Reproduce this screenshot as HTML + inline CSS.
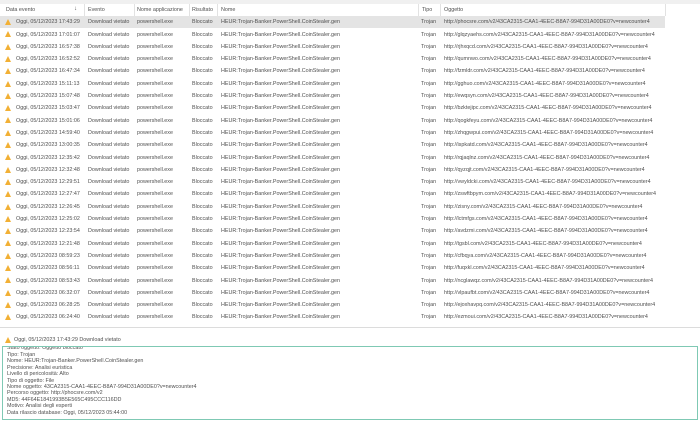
<!DOCTYPE html>
<html><head><meta charset="utf-8"><style>
html,body{margin:0;padding:0;width:700px;height:421px;overflow:hidden;background:#fff;font-family:"Liberation Sans",sans-serif;color:#505050;font-size:5.4px}
.top{position:absolute;left:0;top:0;width:700px;height:4px;background:#f0f0f0}
.wrap{position:absolute;left:0;top:4px;width:700px;height:323px;border-bottom:1px solid #dcdcdc}
.hdr{position:absolute;top:0;left:0;width:700px;height:12px;background:#fff}
.hdr span{position:absolute;top:3px;white-space:nowrap}
.sep{position:absolute;top:0;width:1px;height:12px;background:#e2e2e2}
.row{position:absolute;left:0;width:700px;height:12.3px}
.row span{position:absolute;top:3.3px;white-space:nowrap}
.sel{background:#e4e4e4;width:665px}
.ic{position:absolute;left:5px;top:3px;width:0;height:0;border-left:3.5px solid transparent;border-right:3.5px solid transparent;border-bottom:6px solid #f2b035}
.c1{left:16px}.c2{left:88px}.c3{left:137px}.c4{left:192px}.c5{left:221px}.c6{left:421px}.c7{left:444px}
.lab{position:absolute;left:5px;top:337px;white-space:nowrap}
.lab .ic{top:-0.5px;left:0}
.box{position:absolute;left:2px;top:346px;width:694px;height:72px;border:1px solid #7fc9b4;overflow:hidden}
.box div{position:absolute;left:4px;white-space:nowrap}
</style></head><body>
<div class="top"></div>
<div class="wrap">
<div class="hdr">
<span style="left:6px">Data evento</span><span style="left:74px;font-size:6px;top:2px">&#8595;</span>
<div class="sep" style="left:84px"></div><span style="left:88px">Evento</span>
<div class="sep" style="left:134px"></div><span style="left:137px">Nome applicazione</span>
<div class="sep" style="left:189px"></div><span style="left:192px">Risultato</span>
<div class="sep" style="left:217px"></div><span style="left:221px">Nome</span>
<div class="sep" style="left:418px"></div><span style="left:422px">Tipo</span>
<div class="sep" style="left:440px"></div><span style="left:444px">Oggetto</span>
<div class="sep" style="left:665px"></div>
</div>
<div class="row sel" style="top:12px"><i class="ic"></i><span class="c1">Oggi, 05/12/2023 17:43:29</span><span class="c2">Download vietato</span><span class="c3">powershell.exe</span><span class="c4">Bloccato</span><span class="c5">HEUR:Trojan-Banker.PowerShell.CoinStealer.gen</span><span class="c6">Trojan</span><span class="c7">http://phocsre.com/v2/43CA2315-CAA1-4EEC-B8A7-994D31A00DE0?v=newcounter4</span></div>
<div class="row" style="top:24.3px"><i class="ic"></i><span class="c1">Oggi, 05/12/2023 17:01:07</span><span class="c2">Download vietato</span><span class="c3">powershell.exe</span><span class="c4">Bloccato</span><span class="c5">HEUR:Trojan-Banker.PowerShell.CoinStealer.gen</span><span class="c6">Trojan</span><span class="c7">http://glqzyaehs.com/v2/43CA2315-CAA1-4EEC-B8A7-994D31A00DE0?v=newcounter4</span></div>
<div class="row" style="top:36.6px"><i class="ic"></i><span class="c1">Oggi, 05/12/2023 16:57:38</span><span class="c2">Download vietato</span><span class="c3">powershell.exe</span><span class="c4">Bloccato</span><span class="c5">HEUR:Trojan-Banker.PowerShell.CoinStealer.gen</span><span class="c6">Trojan</span><span class="c7">http://rjhxqcd.com/v2/43CA2315-CAA1-4EEC-B8A7-994D31A00DE0?v=newcounter4</span></div>
<div class="row" style="top:48.9px"><i class="ic"></i><span class="c1">Oggi, 05/12/2023 16:52:52</span><span class="c2">Download vietato</span><span class="c3">powershell.exe</span><span class="c4">Bloccato</span><span class="c5">HEUR:Trojan-Banker.PowerShell.CoinStealer.gen</span><span class="c6">Trojan</span><span class="c7">http://qumnwo.com/v2/43CA2315-CAA1-4EEC-B8A7-994D31A00DE0?v=newcounter4</span></div>
<div class="row" style="top:61.2px"><i class="ic"></i><span class="c1">Oggi, 05/12/2023 16:47:34</span><span class="c2">Download vietato</span><span class="c3">powershell.exe</span><span class="c4">Bloccato</span><span class="c5">HEUR:Trojan-Banker.PowerShell.CoinStealer.gen</span><span class="c6">Trojan</span><span class="c7">http://fzmldr.com/v2/43CA2315-CAA1-4EEC-B8A7-994D31A00DE0?v=newcounter4</span></div>
<div class="row" style="top:73.5px"><i class="ic"></i><span class="c1">Oggi, 05/12/2023 15:11:13</span><span class="c2">Download vietato</span><span class="c3">powershell.exe</span><span class="c4">Bloccato</span><span class="c5">HEUR:Trojan-Banker.PowerShell.CoinStealer.gen</span><span class="c6">Trojan</span><span class="c7">http://gghuo.com/v2/43CA2315-CAA1-4EEC-B8A7-994D31A00DE0?v=newcounter4</span></div>
<div class="row" style="top:85.8px"><i class="ic"></i><span class="c1">Oggi, 05/12/2023 15:07:48</span><span class="c2">Download vietato</span><span class="c3">powershell.exe</span><span class="c4">Bloccato</span><span class="c5">HEUR:Trojan-Banker.PowerShell.CoinStealer.gen</span><span class="c6">Trojan</span><span class="c7">http://ewqsyn.com/v2/43CA2315-CAA1-4EEC-B8A7-994D31A00DE0?v=newcounter4</span></div>
<div class="row" style="top:98.1px"><i class="ic"></i><span class="c1">Oggi, 05/12/2023 15:03:47</span><span class="c2">Download vietato</span><span class="c3">powershell.exe</span><span class="c4">Bloccato</span><span class="c5">HEUR:Trojan-Banker.PowerShell.CoinStealer.gen</span><span class="c6">Trojan</span><span class="c7">http://bzktejipc.com/v2/43CA2315-CAA1-4EEC-B8A7-994D31A00DE0?v=newcounter4</span></div>
<div class="row" style="top:110.4px"><i class="ic"></i><span class="c1">Oggi, 05/12/2023 15:01:06</span><span class="c2">Download vietato</span><span class="c3">powershell.exe</span><span class="c4">Bloccato</span><span class="c5">HEUR:Trojan-Banker.PowerShell.CoinStealer.gen</span><span class="c6">Trojan</span><span class="c7">http://qogkfeyu.com/v2/43CA2315-CAA1-4EEC-B8A7-994D31A00DE0?v=newcounter4</span></div>
<div class="row" style="top:122.7px"><i class="ic"></i><span class="c1">Oggi, 05/12/2023 14:59:40</span><span class="c2">Download vietato</span><span class="c3">powershell.exe</span><span class="c4">Bloccato</span><span class="c5">HEUR:Trojan-Banker.PowerShell.CoinStealer.gen</span><span class="c6">Trojan</span><span class="c7">http://zhqgwpui.com/v2/43CA2315-CAA1-4EEC-B8A7-994D31A00DE0?v=newcounter4</span></div>
<div class="row" style="top:135px"><i class="ic"></i><span class="c1">Oggi, 05/12/2023 13:00:35</span><span class="c2">Download vietato</span><span class="c3">powershell.exe</span><span class="c4">Bloccato</span><span class="c5">HEUR:Trojan-Banker.PowerShell.CoinStealer.gen</span><span class="c6">Trojan</span><span class="c7">http://ispkatd.com/v2/43CA2315-CAA1-4EEC-B8A7-994D31A00DE0?v=newcounter4</span></div>
<div class="row" style="top:147.3px"><i class="ic"></i><span class="c1">Oggi, 05/12/2023 12:35:42</span><span class="c2">Download vietato</span><span class="c3">powershell.exe</span><span class="c4">Bloccato</span><span class="c5">HEUR:Trojan-Banker.PowerShell.CoinStealer.gen</span><span class="c6">Trojan</span><span class="c7">http://rqjaqlnz.com/v2/43CA2315-CAA1-4EEC-B8A7-994D31A00DE0?v=newcounter4</span></div>
<div class="row" style="top:159.6px"><i class="ic"></i><span class="c1">Oggi, 05/12/2023 12:32:48</span><span class="c2">Download vietato</span><span class="c3">powershell.exe</span><span class="c4">Bloccato</span><span class="c5">HEUR:Trojan-Banker.PowerShell.CoinStealer.gen</span><span class="c6">Trojan</span><span class="c7">http://qyzqjt.com/v2/43CA2315-CAA1-4EEC-B8A7-994D31A00DE0?v=newcounter4</span></div>
<div class="row" style="top:171.9px"><i class="ic"></i><span class="c1">Oggi, 05/12/2023 12:29:51</span><span class="c2">Download vietato</span><span class="c3">powershell.exe</span><span class="c4">Bloccato</span><span class="c5">HEUR:Trojan-Banker.PowerShell.CoinStealer.gen</span><span class="c6">Trojan</span><span class="c7">http://vwyldcki.com/v2/43CA2315-CAA1-4EEC-B8A7-994D31A00DE0?v=newcounter4</span></div>
<div class="row" style="top:184.2px"><i class="ic"></i><span class="c1">Oggi, 05/12/2023 12:27:47</span><span class="c2">Download vietato</span><span class="c3">powershell.exe</span><span class="c4">Bloccato</span><span class="c5">HEUR:Trojan-Banker.PowerShell.CoinStealer.gen</span><span class="c6">Trojan</span><span class="c7">http://zswftbpym.com/v2/43CA2315-CAA1-4EEC-B8A7-994D31A00DE0?v=newcounter4</span></div>
<div class="row" style="top:196.5px"><i class="ic"></i><span class="c1">Oggi, 05/12/2023 12:26:45</span><span class="c2">Download vietato</span><span class="c3">powershell.exe</span><span class="c4">Bloccato</span><span class="c5">HEUR:Trojan-Banker.PowerShell.CoinStealer.gen</span><span class="c6">Trojan</span><span class="c7">http://zisny.com/v2/43CA2315-CAA1-4EEC-B8A7-994D31A00DE0?v=newcounter4</span></div>
<div class="row" style="top:208.8px"><i class="ic"></i><span class="c1">Oggi, 05/12/2023 12:25:02</span><span class="c2">Download vietato</span><span class="c3">powershell.exe</span><span class="c4">Bloccato</span><span class="c5">HEUR:Trojan-Banker.PowerShell.CoinStealer.gen</span><span class="c6">Trojan</span><span class="c7">http://lctmfgs.com/v2/43CA2315-CAA1-4EEC-B8A7-994D31A00DE0?v=newcounter4</span></div>
<div class="row" style="top:221.1px"><i class="ic"></i><span class="c1">Oggi, 05/12/2023 12:23:54</span><span class="c2">Download vietato</span><span class="c3">powershell.exe</span><span class="c4">Bloccato</span><span class="c5">HEUR:Trojan-Banker.PowerShell.CoinStealer.gen</span><span class="c6">Trojan</span><span class="c7">http://avdzmi.com/v2/43CA2315-CAA1-4EEC-B8A7-994D31A00DE0?v=newcounter4</span></div>
<div class="row" style="top:233.4px"><i class="ic"></i><span class="c1">Oggi, 05/12/2023 12:21:48</span><span class="c2">Download vietato</span><span class="c3">powershell.exe</span><span class="c4">Bloccato</span><span class="c5">HEUR:Trojan-Banker.PowerShell.CoinStealer.gen</span><span class="c6">Trojan</span><span class="c7">http://tgsbl.com/v2/43CA2315-CAA1-4EEC-B8A7-994D31A00DE0?v=newcounter4</span></div>
<div class="row" style="top:245.7px"><i class="ic"></i><span class="c1">Oggi, 05/12/2023 08:59:23</span><span class="c2">Download vietato</span><span class="c3">powershell.exe</span><span class="c4">Bloccato</span><span class="c5">HEUR:Trojan-Banker.PowerShell.CoinStealer.gen</span><span class="c6">Trojan</span><span class="c7">http://cfbqya.com/v2/43CA2315-CAA1-4EEC-B8A7-994D31A00DE0?v=newcounter4</span></div>
<div class="row" style="top:258px"><i class="ic"></i><span class="c1">Oggi, 05/12/2023 08:56:11</span><span class="c2">Download vietato</span><span class="c3">powershell.exe</span><span class="c4">Bloccato</span><span class="c5">HEUR:Trojan-Banker.PowerShell.CoinStealer.gen</span><span class="c6">Trojan</span><span class="c7">http://fuqxkl.com/v2/43CA2315-CAA1-4EEC-B8A7-994D31A00DE0?v=newcounter4</span></div>
<div class="row" style="top:270.3px"><i class="ic"></i><span class="c1">Oggi, 05/12/2023 08:53:43</span><span class="c2">Download vietato</span><span class="c3">powershell.exe</span><span class="c4">Bloccato</span><span class="c5">HEUR:Trojan-Banker.PowerShell.CoinStealer.gen</span><span class="c6">Trojan</span><span class="c7">http://ncglawqz.com/v2/43CA2315-CAA1-4EEC-B8A7-994D31A00DE0?v=newcounter4</span></div>
<div class="row" style="top:282.6px"><i class="ic"></i><span class="c1">Oggi, 05/12/2023 06:32:07</span><span class="c2">Download vietato</span><span class="c3">powershell.exe</span><span class="c4">Bloccato</span><span class="c5">HEUR:Trojan-Banker.PowerShell.CoinStealer.gen</span><span class="c6">Trojan</span><span class="c7">http://vlpaufbt.com/v2/43CA2315-CAA1-4EEC-B8A7-994D31A00DE0?v=newcounter4</span></div>
<div class="row" style="top:294.9px"><i class="ic"></i><span class="c1">Oggi, 05/12/2023 06:28:25</span><span class="c2">Download vietato</span><span class="c3">powershell.exe</span><span class="c4">Bloccato</span><span class="c5">HEUR:Trojan-Banker.PowerShell.CoinStealer.gen</span><span class="c6">Trojan</span><span class="c7">http://ejoxhavpq.com/v2/43CA2315-CAA1-4EEC-B8A7-994D31A00DE0?v=newcounter4</span></div>
<div class="row" style="top:307.2px"><i class="ic"></i><span class="c1">Oggi, 05/12/2023 06:24:40</span><span class="c2">Download vietato</span><span class="c3">powershell.exe</span><span class="c4">Bloccato</span><span class="c5">HEUR:Trojan-Banker.PowerShell.CoinStealer.gen</span><span class="c6">Trojan</span><span class="c7">http://ezmoui.com/v2/43CA2315-CAA1-4EEC-B8A7-994D31A00DE0?v=newcounter4</span></div>
</div>
<div class="lab"><i class="ic"></i><span style="position:absolute;left:9px;top:0">Oggi, 05/12/2023 17:43:29 Download vietato</span></div>
<div class="box">
<div style="top:-2px">Stato oggetto: Oggetto bloccato</div>
<div style="top:5px">Tipo: Trojan</div>
<div style="top:11.4px">Nome: HEUR:Trojan-Banker.PowerShell.CoinStealer.gen</div>
<div style="top:17.8px">Precisione: Analisi euristica</div>
<div style="top:24.2px">Livello di pericolosità: Alto</div>
<div style="top:30.6px">Tipo di oggetto: File</div>
<div style="top:37px">Nome oggetto: 43CA2315-CAA1-4EEC-B8A7-994D31A00DE0?v=newcounter4</div>
<div style="top:43.4px">Percorso oggetto: http://phocsre.com/v2</div>
<div style="top:49.8px">MD5: 44F64E1841993B5E565C495CCC116DD</div>
<div style="top:56.2px">Motivo: Analisi degli esperti</div>
<div style="top:62.6px">Data rilascio database: Oggi, 05/12/2023 05:44:00</div>
</div>
</body></html>
